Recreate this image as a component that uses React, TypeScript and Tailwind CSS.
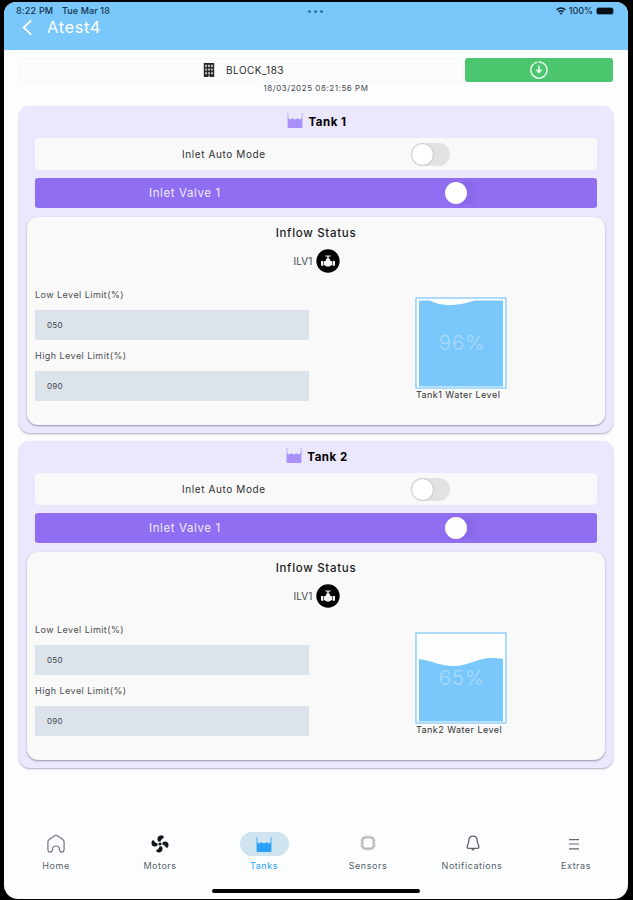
import type { ReactNode } from "react";
import { clsx } from "clsx";

const TANKS = [
  { id: 1, level: 96, low: "050", high: "090", wave: "M0 0 H11 Q18 4 29 4.5 Q40 5 56 0 H84 V86 H0 Z" },
  { id: 2, level: 65, low: "050", high: "090", wave: "M0 23.5 C12 25 21 30.5 34 30.5 C50 30.5 58 22.5 73 22.5 Q79 22.5 84 23.5 V86 H0 Z" },
];

/** Open-topped tank filled with water. */
function TankIcon({ className }: { className?: string }) {
  return (
    <svg viewBox="0 0 16 15" className={className} fill="none">
      <path d="M0.9 0 V14.3 M15.1 0 V14.3" stroke="currentColor" strokeWidth="1.1" opacity="0.65" />
      <path d="M1 5 L3 6.4 L5.5 5.2 L8 6.6 L10.5 5.2 L13 6.4 L15 5 V15 H1 Z" fill="currentColor" />
    </svg>
  );
}

function BuildingIcon() {
  return (
    <svg viewBox="0 0 12 14" className="h-[14px] w-[12px]">
      <path d="M0.8 0 H11.2 V14 H0.8 Z" fill="#29292b" />
      <path
        d="M2.2 1.8h1.7v2.2H2.2z M5.1 1.8h1.8v2.2H5.1z M8.1 1.8h1.7v2.2H8.1z M2.2 5.6h1.7v2H2.2z M5.1 5.6h1.8v2H5.1z M8.1 5.6h1.7v2H8.1z M2.2 9.2h1.7v2H2.2z M5.1 9.2h1.8v2H5.1z M8.1 9.2h1.7v2H8.1z M5.3 12.4h1.4V14H5.3z"
        fill="#cfcfd1"
      />
    </svg>
  );
}

function DownloadIcon() {
  return (
    <svg viewBox="0 0 20 20" className="size-[20px]" fill="none" stroke="#e4f9e8" strokeWidth="1.5" strokeLinecap="round">
      <path d="M10 1.9 A8.1 8.1 0 1 1 4.2 4.3" />
      <path d="M5.7 3.1 L7.6 2.2" />
      <path d="M10 6 V12" />
      <path d="M7.4 10.2 L10 13.3 L12.6 10.2 Z" fill="#e4f9e8" strokeWidth="0.8" strokeLinejoin="round" />
    </svg>
  );
}

function ValveIcon() {
  return (
    <svg viewBox="0 0 24 24" className="size-[24px] shrink-0">
      <circle cx="12" cy="12" r="11.7" fill="#000" />
      <path d="M9.3 6.6 H14.7 V7.5 H12.7 V9.6 H13.8 V11 L15.2 12.3 H16 V16.3 H15.2 L13.6 17.5 H10.4 L8.8 16.3 H8 V12.3 H8.8 L10.2 11 V9.6 H11.3 V7.5 H9.3 Z" fill="#f5f5f5" />
      <path d="M5 12 H7.4 V16.7 H5 Z M16.6 12 H19 V16.7 H16.6 Z" fill="#f5f5f5" />
    </svg>
  );
}

function HomeIcon() {
  return (
    <svg viewBox="0 0 20 20" className="size-[20px]" fill="none" stroke="#707478" strokeWidth="1.2" strokeLinejoin="round">
      <path d="M10 1.3 Q10.7 1.3 11.4 1.8 L16.5 5.2 Q18.1 6.3 18.1 8.1 V15.6 Q18.1 18.1 15.8 18.1 Q13.6 18.1 13.5 15.6 V15 Q13.4 12 10 12 Q6.6 12 6.5 15 V15.6 Q6.4 18.1 4.2 18.1 Q1.9 18.1 1.9 15.6 V8.1 Q1.9 6.3 3.5 5.2 L8.6 1.8 Q9.3 1.3 10 1.3 Z" />
    </svg>
  );
}

function FanIcon() {
  return (
    <svg viewBox="0 0 20 20" className="size-[20px]" fill="#111719">
      {[0, 90, 180, 270].map((angle) => (
        <path key={angle} transform={`rotate(${angle} 10 10)`} d="M8.2 7.4 C6.7 5.2 7.6 2.4 9.6 1.7 C11.3 1.2 13.7 1.6 13.8 2.9 C13.9 4.6 11.6 4.3 11 6.6 Q10 7.9 8.2 7.4 Z" />
      ))}
      <circle cx="10" cy="10" r="1.3" />
      <path d="M10 7 V13 M7 10 H13" stroke="#111719" strokeWidth="0.6" />
    </svg>
  );
}

function SensorIcon() {
  return (
    <svg viewBox="0 0 16 16" className="mb-[2px] size-[16px]" fill="none">
      <rect x="2.4" y="2.4" width="11.2" height="11.2" rx="2.8" stroke="#b3b5b7" strokeWidth="2" />
      <path d="M4.5 1 H11.5 M4.5 15 H11.5 M1 4.5 V11.5 M15 4.5 V11.5" stroke="#c2c4c6" strokeWidth="1" strokeDasharray="1.5 1.2" />
    </svg>
  );
}

function BellIcon() {
  return (
    <svg viewBox="0 0 16 18" className="mb-[2px] ml-[2px] h-[18px] w-[16px]" fill="none" stroke="#5f6367" strokeWidth="1.3" strokeLinejoin="round">
      <path d="M8 2.2 C5.2 2.2 3.9 4.4 3.8 6.8 C3.7 9.8 3 10.6 2.4 11.6 C1.7 13 2.2 14.4 3.6 14.4 H12.4 C13.8 14.4 14.3 13 13.6 11.6 C13 10.6 12.3 9.8 12.2 6.8 C12.1 4.4 10.8 2.2 8 2.2 Z" />
      <path d="M6.9 15.2 Q8 16.3 9.1 15.2" />
    </svg>
  );
}

function MenuIcon() {
  return (
    <svg viewBox="0 0 12 12" className="mr-[4px] size-[12px]" stroke="#65696d" strokeWidth="1.2">
      <path d="M1 1.6 H11 M1 6 H11 M1 10.8 H11" />
    </svg>
  );
}

function StatusBar() {
  return (
    <div className="flex h-[17px] items-center pt-[1px] pr-[12px] pl-[12px] text-[9px] font-medium text-[#12334a]">
      <span className="w-[46px] tracking-[0.2px] whitespace-nowrap">8:22 PM</span>
      <span className="w-[246px] tracking-[0.1px]">Tue Mar 18</span>
      <span className="flex gap-[3px]">
        <i className="size-[3px] rounded-full bg-[#2b77a8]" />
        <i className="size-[3px] rounded-full bg-[#2b77a8]" />
        <i className="size-[3px] rounded-full bg-[#2b77a8]" />
      </span>
      <div className="ml-auto flex items-center gap-[3px]">
        <svg viewBox="0 0 10 8" className="h-[8px] w-[10px]" fill="none" stroke="#0b2233" strokeWidth="1.5">
          <path d="M0.6 2.9 Q5 -0.8 9.4 2.9 M2.4 4.8 Q5 2.7 7.6 4.8" />
          <path d="M3.8 6 L5 7.5 L6.2 6 Z" fill="#0b2233" strokeWidth="0.5" />
        </svg>
        <span>100%</span>
        <svg viewBox="0 0 20 8" className="h-[8px] w-[20px]">
          <rect x="0.4" y="0.5" width="17" height="7" rx="2" fill="#0a0f14" stroke="#5a9cc8" strokeWidth="0.6" />
          <path d="M18.6 2.7 Q19.6 4 18.6 5.3 Z" fill="#5a9cc8" />
        </svg>
      </div>
    </div>
  );
}

function Field({ label, value }: { label: string; value: string }) {
  return (
    <div className="w-[274px]">
      <div className="h-[22px] text-[9px] leading-[13px] tracking-[0.45px] text-[#4b4b4d]">{label}</div>
      <div className="flex h-[30px] items-center bg-[#dce3eb] pl-[12px] text-[8px] tracking-[0.3px] text-[#3f454c]">
        {value}
      </div>
    </div>
  );
}

function TankCard({ tank }: { tank: (typeof TANKS)[number] }) {
  return (
    <section className="h-[327px] rounded-[11px] bg-[#ebe7fc] px-[8px] shadow-[0_1px_2px_rgba(60,50,90,0.4)]">
      <div className="flex h-[32px] items-center justify-center gap-[5px] pl-[2px]">
        <TankIcon className="mb-[3px] h-[15px] w-[16px] text-[#a890f8]" />
        <h2 className="pt-[2px] text-[11.5px] font-bold tracking-[0.5px] text-black">Tank {tank.id}</h2>
      </div>

      <div className="mx-[8px] flex h-[32px] items-center rounded-[4px] bg-[#f9f9f9]">
        <span className="ml-[147px] w-[229px] text-[10px] tracking-[0.6px] text-[#303032]">Inlet Auto Mode</span>
        <div className="h-[23px] w-[39px] rounded-full bg-[#e2e2e4] p-[1px]">
          <div className="size-[21px] rounded-full bg-white shadow-[0_0_2px_rgba(0,0,0,0.3)]" />
        </div>
      </div>

      <div className="mx-[8px] mt-[8px] flex h-[30px] items-center rounded-[3px] bg-[#8f6ef2]">
        <span className="mt-[2px] ml-[114px] w-[296px] text-[11.5px] tracking-[0.6px] text-[#efe9ff]">Inlet Valve 1</span>
        <div className="h-[22px] w-[36px] rounded-full bg-linear-to-r from-[#7c5dd9] to-[#8f6ef2]">
          <div className="size-[22px] rounded-full bg-white" />
        </div>
      </div>

      <div className="mt-[9px] h-[208px] rounded-[11px] bg-[#f9f9f9] px-[8px] pt-[9px] shadow-[0_1px_2px_rgba(50,40,80,0.45)]">
        <h3 className="text-center text-[11.5px] leading-[15px] font-medium tracking-[0.7px] text-[#1b1b1d]">Inflow Status</h3>
        <div className="mt-[8px] flex h-[24px] items-center justify-center gap-[4px] pl-[2px]">
          <span className="text-[10px] tracking-[0.05px] text-[#49494b]">ILV1</span>
          <ValveIcon />
        </div>
        <div className="flex pt-[14px]">
          <div className="flex flex-col gap-[9px] pt-[1px]">
            <Field label="Low Level Limit(%)" value={tank.low} />
            <Field label="High Level Limit(%)" value={tank.high} />
          </div>
          <div className="mt-[10px] ml-[106px] w-[92px]">
            <svg viewBox="0 0 92 92" className="size-[92px]">
              <rect x="1" y="1" width="90" height="90" fill="#fdfeff" stroke="#8ccdfb" strokeWidth="1.4" />
              <path d={tank.wave} transform="translate(4 3.5)" fill="#7ac7fb" />
              <text
                x="47"
                y="53"
                textAnchor="middle"
                fontSize="20.5"
                letterSpacing="0.9"
                className="fill-[#a9dafc] font-light"
              >
                {tank.level}%
              </text>
            </svg>
            <div className="pl-[1px] text-[9px] leading-[12px] tracking-[0.45px] whitespace-nowrap text-[#303032]">
              Tank{tank.id} Water Level
            </div>
          </div>
        </div>
      </div>
    </section>
  );
}

const TABS: { label: string; icon: ReactNode; active?: boolean }[] = [
  { label: "Home", icon: <HomeIcon /> },
  { label: "Motors", icon: <FanIcon /> },
  { label: "Tanks", icon: <TankIcon className="h-[15px] w-[16px]" />, active: true },
  { label: "Sensors", icon: <SensorIcon /> },
  { label: "Notifications", icon: <BellIcon /> },
  { label: "Extras", icon: <MenuIcon /> },
];

function BottomNav() {
  return (
    <nav className="grid grid-cols-6">
      {TABS.map((tab) => (
        <div key={tab.label} className={clsx("flex flex-col items-center", tab.active ? "text-[#2ba0fb]" : "text-[#566066]")}>
          <div className={clsx("flex h-[24px] w-[49px] items-center justify-center rounded-full", tab.active && "bg-[#d0e4f0]")}>
            {tab.icon}
          </div>
          <span className="mt-[3px] text-[9px] leading-[13px] tracking-[0.55px]">{tab.label}</span>
        </div>
      ))}
    </nav>
  );
}

export default function App() {
  return (
    <div className="h-[900px] w-[633px] overflow-hidden bg-black pt-[2px] pl-[4px] font-['Inter',sans-serif]">
      <div className="flex h-[897px] w-[624px] flex-col overflow-hidden rounded-t-[12px] rounded-b-[14px] bg-[#fbfdff]">
        <header className="h-[48px] shrink-0 bg-[#7ac7fb]">
          <StatusBar />
          <div className="flex h-[16px] items-center pl-[17px] text-white">
            <svg viewBox="0 0 12 18" className="h-[17px] w-[12px]" fill="none" stroke="currentColor" strokeWidth="2">
              <path d="M10.5 1.5 L2.5 9 L10.5 16.5" />
            </svg>
            <h1 className="ml-[14px] text-[16.5px] leading-[16px] tracking-[0.6px]">Atest4</h1>
          </div>
        </header>

        <div className="mx-[15px] mt-[8px] flex h-[24px] shrink-0 gap-[1px]">
          <div className="flex flex-1 items-center rounded-[4px] border border-[#f4f6f9] bg-[#fcfcfd] pl-[183px]">
            <BuildingIcon />
            <span className="ml-[11px] text-[10px] tracking-[0.5px] text-[#2d2d2f]">BLOCK_183</span>
          </div>
          <button className="flex w-[148px] items-center justify-center rounded-[3px] bg-[#4bc66e]">
            <DownloadIcon />
          </button>
        </div>
        <p className="shrink-0 text-center text-[8px] leading-[12px] tracking-[0.55px] text-[#4a4a4c]">18/03/2025 08:21:56 PM</p>

        <main className="mx-[15px] mt-[12px] flex flex-col gap-[8px]">
          {TANKS.map((tank) => (
            <TankCard key={tank.id} tank={tank} />
          ))}
        </main>

        <div className="mt-auto">
          <BottomNav />
          <div className="mx-auto mt-[17px] mb-[6px] h-[4px] w-[208px] rounded-full bg-black" />
        </div>
      </div>
    </div>
  );
}
